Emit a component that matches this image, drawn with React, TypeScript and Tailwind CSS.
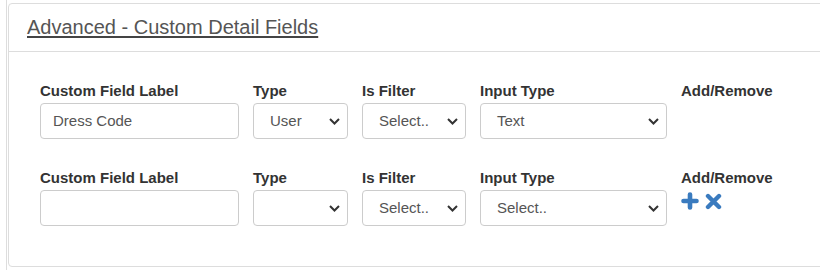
const fields = [
  { label: 'Dress Code', type: 'User', filter: 'Select..', input: 'Text', actions: false },
  { label: '', type: '', filter: 'Select..', input: 'Select..', actions: true },
];

function Chevron() {
  return (
    <svg width="11" height="7" viewBox="0 0 11 7" className="shrink-0">
      <path d="M1 1l4.5 4.5L10 1" fill="none" stroke="#333" strokeWidth="2" />
    </svg>
  );
}

function FakeSelect({ value, width }: { value: string; width: string }) {
  return (
    <div
      className={`${width} h-[36px] flex items-center justify-between pl-[16px] pr-[7px] border border-[#ccc] rounded-[4px] bg-white text-[15px] text-[#555]`}
    >
      <span>{value}</span>
      <Chevron />
    </div>
  );
}

function PlusIcon() {
  return (
    <svg width="18" height="18" viewBox="0 0 18 18">
      <path d="M9 2.5v13M2.5 9h13" stroke="#3a7bbf" strokeWidth="4.6" strokeLinecap="round" />
    </svg>
  );
}

function TimesIcon() {
  return (
    <svg width="17" height="17" viewBox="0 0 17 17">
      <path d="M3 3l11 11M14 3L3 14" stroke="#3a7bbf" strokeWidth="4.4" strokeLinecap="round" />
    </svg>
  );
}

function Label({ children }: { children: string }) {
  return <div className="text-[15px] leading-[22px] font-bold text-[#333] mb-[1px]">{children}</div>;
}

export default function App() {
  return (
    <div className="w-[820px] h-[270px] overflow-hidden bg-white font-['Liberation_Sans',Arial,sans-serif]">
      <div className="h-[270px] ml-[6px] border-l border-[#ddd] pl-[1px] pt-[3px]">
        <div className="w-[830px] border border-[#ddd] rounded-[4px] bg-white">
          <div className="h-[48px] flex items-center pl-[18px] border-b border-[#ddd]">
            <span className="text-[20px] leading-[23px] text-[#555] underline decoration-[#444] underline-offset-[2px]">
              Advanced - Custom Detail Fields
            </span>
          </div>
          <div className="pl-[31px] pt-[28px] pb-[40px] flex flex-col gap-[28px]">
            {fields.map((f, i) => (
              <div key={i} className="flex gap-[14px]">
                <div className="w-[199px]">
                  <Label>Custom Field Label</Label>
                  <div className="h-[36px] flex items-center px-[12px] border border-[#ccc] rounded-[4px] text-[15px] text-[#555]">
                    {f.label}
                  </div>
                </div>
                <div>
                  <Label>Type</Label>
                  <FakeSelect value={f.type} width="w-[95px]" />
                </div>
                <div>
                  <Label>Is Filter</Label>
                  <FakeSelect value={f.filter} width="w-[104px]" />
                </div>
                <div>
                  <Label>Input Type</Label>
                  <FakeSelect value={f.input} width="w-[187px]" />
                </div>
                <div>
                  <Label>Add/Remove</Label>
                  {f.actions && (
                    <div className="flex items-center gap-[6px] mt-[3px]">
                      <PlusIcon />
                      <TimesIcon />
                    </div>
                  )}
                </div>
              </div>
            ))}
          </div>
        </div>
      </div>
    </div>
  );
}
